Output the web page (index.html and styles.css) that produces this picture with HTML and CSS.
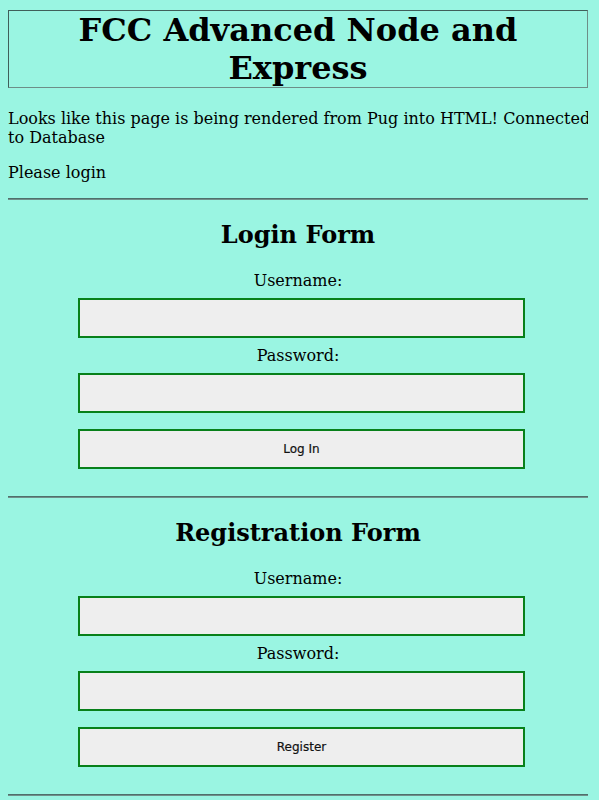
FILE: index.html
```html
<!DOCTYPE html>
<html>
<head>
<meta charset="utf-8">
<title>FCC Advanced Node and Express</title>
<link rel="stylesheet" href="styles.css">
</head>
<body>
<div class="header">
  <h1 class="title">FCC Advanced Node and Express</h1>
</div>
<p class="intro">Looks like this page is being rendered from Pug into HTML! Connected to Database</p>
<p class="prompt">Please login</p>
<hr class="rule">
<section class="panel">
  <h2 class="panel-title">Login Form</h2>
  <form class="form" action="/login" method="post">
    <label class="field-label first" for="l-user">Username:</label>
    <input class="field" id="l-user" type="text" name="username">
    <label class="field-label" for="l-pass">Password:</label>
    <input class="field" id="l-pass" type="password" name="password">
    <button class="btn" type="submit">Log In</button>
  </form>
</section>
<hr class="rule">
<section class="panel">
  <h2 class="panel-title">Registration Form</h2>
  <form class="form" action="/register" method="post">
    <label class="field-label first" for="r-user">Username:</label>
    <input class="field" id="r-user" type="text" name="username">
    <label class="field-label" for="r-pass">Password:</label>
    <input class="field" id="r-pass" type="password" name="password">
    <button class="btn" type="submit">Register</button>
  </form>
</section>
<hr class="rule">
</body>
</html>
```

FILE: styles.css
```css
html {
  background: #9af5e2;
}
body {
  margin: 8px 11px 8px 8px;
  font-family: "DejaVu Serif", serif;
  font-size: 16px;
  color: #000;
  background: #9af5e2;
}
.header {
  margin-top: 2px;
  border: 1px solid #6d8e88;
  border-top-color: #3f5f5a;
  border-left-color: #3f5f5a;
}
.title {
  margin: 0;
  font-size: 32px;
  line-height: 38px;
  font-weight: bold;
  text-align: center;
}
.intro {
  margin: 21px -6px 0 0;
}
.prompt {
  margin: 16px 0 0 0;
}
.rule {
  margin: 16px 0 0 0;
  border: 0;
  border-top: 1px solid #4f6f6b;
  border-bottom: 1px solid #6f8f8a;
  height: 0;
}
.panel {
  display: flex;
  flex-direction: column;
}
.panel + .rule {
  margin-top: 27px;
}
.panel-title {
  margin: 20px 0 0 0;
  font-size: 24px;
  text-align: center;
}
.form {
  display: flex;
  flex-direction: column;
  align-items: flex-start;
}
.field-label {
  align-self: stretch;
  text-align: center;
  margin-top: 8.5px;
}
.field-label.first {
  margin-top: 22.4px;
}
.field {
  box-sizing: border-box;
  width: 447px;
  height: 40px;
  margin: 7.5px 0 0 70px;
  background: #eeeeee;
  border: 2px solid #08801a;
  padding: 0 4px;
  font-family: "DejaVu Sans", sans-serif;
}
.btn {
  box-sizing: border-box;
  width: 447px;
  height: 39.5px;
  margin: 16.5px 0 0 70px;
  background: #eeeeee;
  border: 2px solid #08801a;
  font-family: "DejaVu Sans", sans-serif;
  font-size: 12px;
  font-weight: 500;
  color: #111;
  padding: 0;
  -webkit-text-stroke: 0.2px #111;
}
```
